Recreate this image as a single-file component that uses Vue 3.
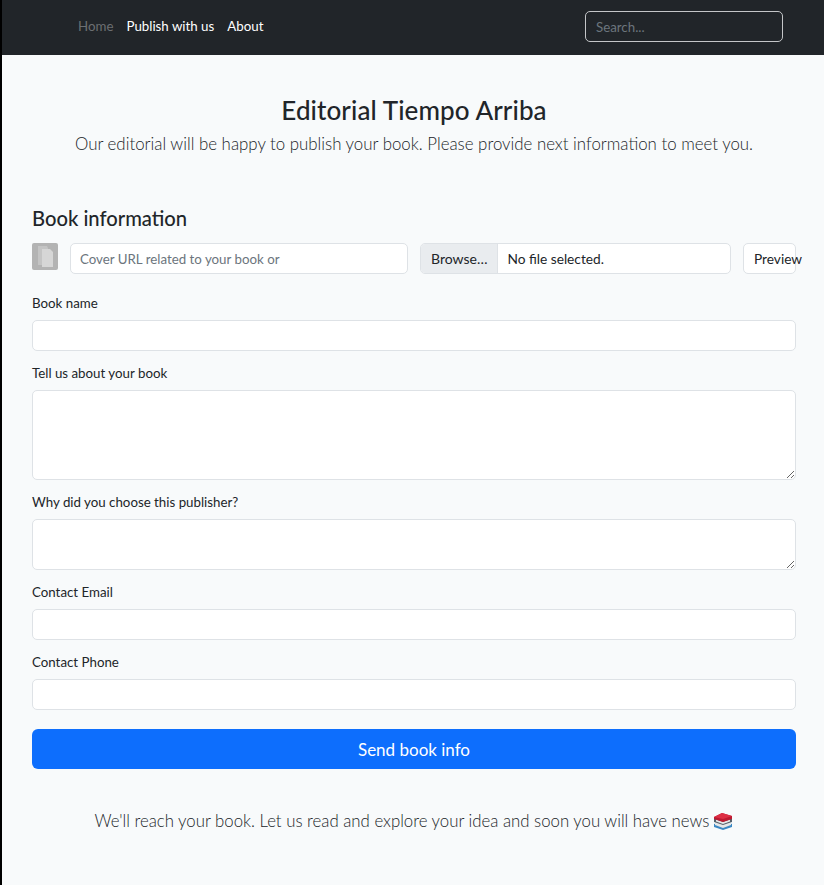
<template>
  <div class="page">
    <nav class="navbar">
      <ul class="nav-links">
        <li v-for="link in links" :key="link.name" :class="{ muted: link.muted }">{{ link.name }}</li>
      </ul>
      <input class="search" type="text" placeholder="Search..." />
    </nav>

    <main class="content">
      <header class="intro">
        <h1>Editorial Tiempo Arriba</h1>
        <p>Our editorial will be happy to publish your book. Please provide next information to meet you.</p>
      </header>

      <h2>Book information</h2>

      <div class="cover-row">
        <div class="thumb">
          <svg width="26" height="27" viewBox="0 0 26 27">
            <rect width="26" height="27" rx="2" fill="#b3b3b3" />
            <path d="M6 3h9l1 2v17H6z" fill="#c4c4c4" />
            <path d="M10 6h8l3 3v15H10z" fill="#d6d6d6" />
          </svg>
        </div>
        <input class="field cover-url" type="text" placeholder="Cover URL related to your book or" />
        <div class="file-input">
          <span class="browse">Browse…</span>
          <span class="file-name">No file selected.</span>
        </div>
        <div class="preview"><span>Preview</span></div>
      </div>

      <div v-for="item in fields" :key="item.label" class="group">
        <label>{{ item.label }}</label>
        <textarea v-if="item.height" class="field" :style="{ height: item.height + 'px' }"></textarea>
        <input v-else class="field" type="text" />
      </div>

      <button class="send" type="button">Send book info</button>

      <p class="closing">
        We'll reach your book. Let us read and explore your idea and soon you will have news<svg class="books" width="20" height="18" viewBox="0 0 20 18">
          <path d="M1 12l9-3 9 3v3l-9 3-9-3z" fill="#3b88c3" />
          <path d="M2 11l8-3 8 3v2l-8 3-8-3z" fill="#e6e7e8" />
          <path d="M1 7l9-3 9 3v3l-9 3-9-3z" fill="#55606a" />
          <path d="M3 7.500l7 2.500 7-2.500v2l-7 2.500-7-2.500z" fill="#e6e7e8" />
          <path d="M1 5l8-4 10 3v3l-9 3-9-3z" fill="#be1931" />
          <path d="M1 5l8-4 10 3-9 3z" fill="#dd2e44" />
        </svg>
      </p>
    </main>
  </div>
</template>

<script setup>
const links = [
  { name: 'Home', muted: true },
  { name: 'Publish with us' },
  { name: 'About' },
]

const fields = [
  { label: 'Book name' },
  { label: 'Tell us about your book', height: 90 },
  { label: 'Why did you choose this publisher?', height: 51 },
  { label: 'Contact Email' },
  { label: 'Contact Phone' },
]
</script>

<style>
html, body {
  margin: 0;
  background: #000;
}
</style>

<style scoped>
.page {
  box-sizing: border-box;
  min-height: 885px;
  margin-left: 2px;
  background: #f8fafb;
  color: #212529;
  font-family: Lato, "Noto Sans", sans-serif;
  font-size: 13.3px;
  line-height: 21px;
}

.navbar {
  display: flex;
  align-items: center;
  justify-content: space-between;
  box-sizing: border-box;
  height: 55px;
  padding: 0 41px 2px 76px;
  background: #212529;
}

.nav-links {
  display: flex;
  gap: 13px;
  margin: 0;
  padding: 0;
  list-style: none;
  color: #fff;
}

.nav-links .muted {
  color: #6c6f72;
}

.search {
  box-sizing: border-box;
  width: 198px;
  height: 31px;
  padding: 0 10px;
  border: 1px solid #c4c6c8;
  border-radius: 5px;
  background: #212529;
  color: #fff;
  font: inherit;
}

.search::placeholder {
  color: #6c757d;
}

.content {
  padding: 0 28px 0 30px;
}

.intro {
  padding-top: 39px;
  text-align: center;
}

h1 {
  margin: 0;
  font-size: 26px;
  font-weight: 500;
  line-height: 32px;
  letter-spacing: 0.1px;
}

.intro p {
  margin: 5px 0 0;
  font-size: 16.85px;
  font-weight: 300;
  line-height: 26px;
}

h2 {
  margin: 49px 0 0;
  font-size: 20.2px;
  font-weight: 500;
  line-height: 24px;
}

.cover-row {
  display: flex;
  align-items: flex-start;
  margin: 13px 0 19px;
}

.thumb {
  flex: none;
  height: 27px;
  margin-right: 12px;
}

.thumb svg {
  display: block;
}

.field {
  display: block;
  box-sizing: border-box;
  width: 100%;
  height: 31px;
  padding: 4px 9px;
  border: 1px solid #dee2e6;
  border-radius: 5px;
  background: #fff;
  color: #212529;
  font: inherit;
}

.field::placeholder {
  color: #6c757d;
}

.cover-url {
  flex: none;
  width: 338px;
  margin-right: 12px;
}

.file-input {
  display: flex;
  flex: none;
  box-sizing: border-box;
  width: 311px;
  height: 31px;
  margin-right: 12px;
  border: 1px solid #dee2e6;
  border-radius: 5px;
  background: #fff;
  overflow: hidden;
  font-size: 13.7px;
  line-height: 29px;
}

.browse {
  padding: 0 10px;
  border-right: 1px solid #dee2e6;
  background: #e9ecef;
  font-size: 14px;
}

.file-name {
  padding-left: 9px;
}

.preview {
  flex: none;
  box-sizing: border-box;
  width: 53px;
  height: 31px;
  padding-left: 10px;
  border: 1px solid #dee2e6;
  border-radius: 5px;
  background: #fff;
  font-size: 13.7px;
  line-height: 29px;
  white-space: nowrap;
}

.group {
  margin-bottom: 12px;
}

label {
  display: block;
  margin-bottom: 6px;
}

textarea.field {
  resize: vertical;
}

.send {
  display: block;
  width: 100%;
  height: 40px;
  margin-top: 19px;
  border: 0;
  border-radius: 6px;
  background: #0d6efd;
  color: #fff;
  font: inherit;
  font-size: 17px;
}

.closing {
  margin: 39px 0 0;
  text-align: center;
  font-size: 16.8px;
  font-weight: 300;
  line-height: 26px;
}

.books {
  margin-left: 4px;
  vertical-align: -3px;
}
</style>
